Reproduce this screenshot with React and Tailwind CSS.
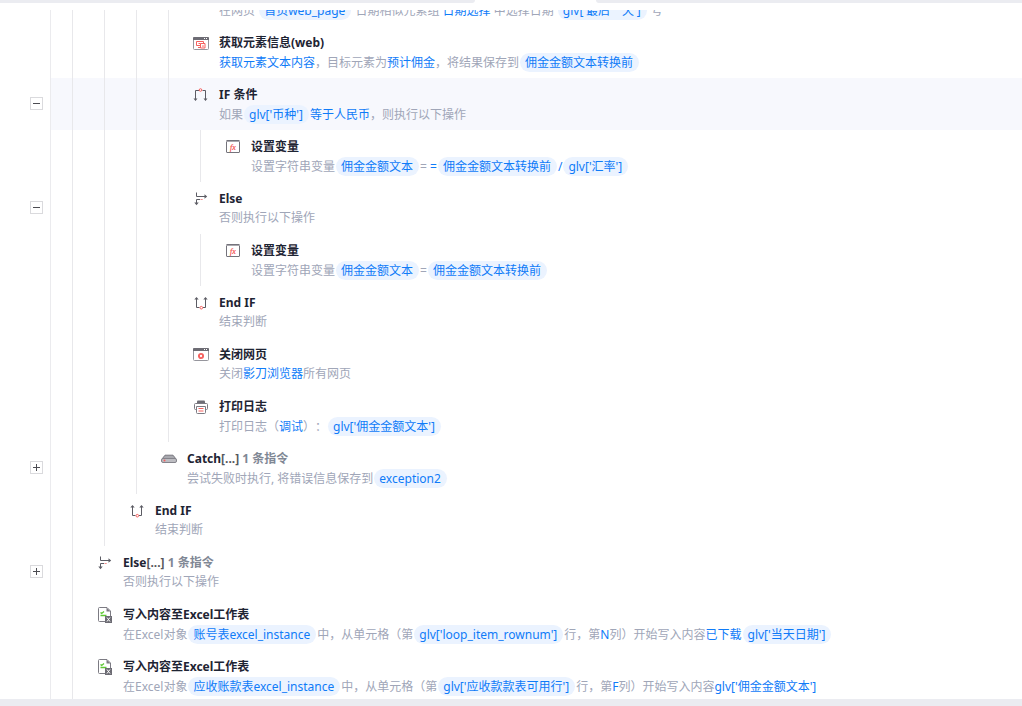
import React from 'react';
import clsx from 'clsx';

const IconBase = ({ children }) => (
  <svg viewBox="0 0 18 18" className="w-[18px] h-[18px] shrink-0" fill="none" stroke="#5c5c64" aria-hidden="true">
    {children}
  </svg>
);

const ElementInfoIcon = () => (
  <IconBase>
    <rect x="1.5" y="2.5" width="15" height="12" rx="1" stroke="#96969d" />
    <path d="M1 5V3a1 1 0 0 1 1-1h14a1 1 0 0 1 1 1v2z" fill="#6d6c74" stroke="none" />
    <path d="M12 3h1v1h-1zM14 3h1v1h-1z" fill="#fff" stroke="none" />
    <path d="M8 10.5H4.500v-4h7V8M8.500 8.500h4.500v4.500H8.500zM6 12.500h2.500M6.500 8.500h2" stroke="#f5615f" />
    <path d="M10 10.500h2l-1 2z" fill="#f5615f" stroke="none" />
  </IconBase>
);

const IfIcon = () => (
  <IconBase>
    <path d="M7 3.500H3.500V12M10.500 3.500h3V12" />
    <path d="M1.500 11.500h4l-2 2.500zM11.500 11.500h4l-2 2.500z" fill="#5c5c64" stroke="none" />
    <circle cx="8.500" cy="3" r="1.300" stroke="#f5615f" />
  </IconBase>
);

const EndIfIcon = () => (
  <IconBase>
    <path d="M4.500 4v8.500H7.500M11 12.500h2.500V4" />
    <path d="M2.300 4.500h4.400L4.500 2zM11.300 4.500h4.400L13.500 2z" fill="#5c5c64" stroke="none" />
    <circle cx="9.300" cy="12.700" r="1.300" stroke="#f5615f" />
  </IconBase>
);

const ElseIcon = () => (
  <IconBase>
    <path d="M4.500 1.500v4H13" />
    <path d="M12.500 3.300v4.400l2.700-2.200z" fill="#5c5c64" stroke="none" />
    <path d="M8 8.500H4.500V12" />
    <path d="M2.300 11.500h4.400l-2.200 2.700z" fill="#5c5c64" stroke="none" />
    <path d="M8.500 8.500h2.200" stroke="#f5908e" />
  </IconBase>
);

const VariableIcon = () => (
  <IconBase>
    <rect x="2.500" y="1.500" width="13" height="12" rx="0.500" stroke="#74737b" />
    <path d="M2 2.500h14" stroke="#a9a8ae" />
    <text x="9" y="11" textAnchor="middle" fill="#f5504e" stroke="#f5504e" strokeWidth="0.200" fontSize="8" fontStyle="italic" fontFamily="Liberation Serif, serif">fx</text>
  </IconBase>
);

const CloseWebIcon = () => (
  <IconBase>
    <rect x="1.500" y="1.500" width="15" height="12" rx="1" stroke="#96969d" />
    <path d="M1 4V2a1 1 0 0 1 1-1h14a1 1 0 0 1 1 1v2z" fill="#6d6c74" stroke="none" />
    <path d="M12 2h1v1h-1zM14 2h1v1h-1z" fill="#fff" stroke="none" />
    <circle cx="9" cy="9" r="2.100" stroke="#f5615f" strokeWidth="1.900" />
  </IconBase>
);

const PrintIcon = () => (
  <IconBase>
    <path d="M5 4V2.500a1 1 0 0 1 1-1h6a1 1 0 0 1 1 1V4z" fill="#6d6c74" stroke="none" />
    <path d="M4.500 10.500h-1a1 1 0 0 1-1-1v-4a1 1 0 0 1 1-1h11a1 1 0 0 1 1 1v4a1 1 0 0 1-1 1h-1" stroke="#7c7b83" />
    <path d="M4.500 7.500h9v6a1 1 0 0 1-1 1h-7a1 1 0 0 1-1-1z" fill="#fff" stroke="#7c7b83" />
    <path d="M6.500 9.500h5M6.500 12h5" stroke="#f5615f" />
  </IconBase>
);

const CatchIcon = () => (
  <IconBase>
    <path d="M5 4.200h8l3 3.800H2z" fill="#a9a9af" stroke="#77767e" strokeLinejoin="round" />
    <rect x="1.500" y="7.500" width="15" height="4" rx="1.500" fill="#bdbdc2" stroke="#85848c" />
    <circle cx="4.500" cy="9.500" r="1" fill="#f5615f" stroke="none" />
  </IconBase>
);

const ExcelIcon = () => (
  <IconBase>
    <path d="M9 14.500H3.500a1 1 0 0 1-1-1v-12a1 1 0 0 1 1-1H11l3.500 3.500V9" stroke="#7c7b83" />
    <path d="M10.500 0.500v4h4z" fill="#7c7b83" stroke="none" />
    <path d="M4.500 5.500l1.200 1L8 4.500M4.500 8.500h6" stroke="#5fc835" strokeWidth="1.300" />
    <rect x="9" y="9" width="7" height="7" fill="#6d6c74" stroke="none" />
    <path d="M11 10.500l3 4M14 10.500l-3 4" stroke="#fff" />
  </IconBase>
);

// plain string = muted text, { b } = highlighted value, { v } = variable tag
const steps = [
  {
    level: 4,
    icon: <ElementInfoIcon />,
    title: '选择日期(web)',
    desc: ['在网页 ', { v: '首页web_page' }, ' 日期相似元素组 ', { b: '日期选择' }, ' 中选择日期 ', { v: "glv['最后一天']" }, ' 号'],
  },
  {
    level: 4,
    icon: <ElementInfoIcon />,
    title: '获取元素信息(web)',
    desc: [{ b: '获取元素文本内容' }, '，目标元素为', { b: '预计佣金' }, '，将结果保存到', { v: '佣金金额文本转换前' }],
  },
  {
    level: 4,
    icon: <IfIcon />,
    title: 'IF 条件',
    fold: 'open',
    active: true,
    desc: ['如果', { v: "glv['币种']" }, { b: '等于人民币' }, '，则执行以下操作'],
  },
  {
    level: 5,
    icon: <VariableIcon />,
    title: '设置变量',
    desc: ['设置字符串变量', { v: '佣金金额文本' }, '= ', { b: '=' }, { v: '佣金金额文本转换前' }, { b: '/' }, { v: "glv['汇率']" }],
  },
  { level: 4, icon: <ElseIcon />, title: 'Else', fold: 'open', desc: ['否则执行以下操作'] },
  {
    level: 5,
    icon: <VariableIcon />,
    title: '设置变量',
    desc: ['设置字符串变量', { v: '佣金金额文本' }, '=', { v: '佣金金额文本转换前' }],
  },
  { level: 4, icon: <EndIfIcon />, title: 'End IF', desc: ['结束判断'] },
  { level: 4, icon: <CloseWebIcon />, title: '关闭网页', desc: ['关闭', { b: '影刀浏览器' }, '所有网页'] },
  {
    level: 4,
    icon: <PrintIcon />,
    title: '打印日志',
    desc: ['打印日志（', { b: '调试' }, '）：', { v: "glv['佣金金额文本']" }],
  },
  {
    level: 3,
    icon: <CatchIcon />,
    title: 'Catch',
    count: '1 条指令',
    fold: 'closed',
    desc: ['尝试失败时执行, 将错误信息保存到', { v: 'exception2' }],
  },
  { level: 2, icon: <EndIfIcon />, title: 'End IF', desc: ['结束判断'] },
  { level: 1, icon: <ElseIcon />, title: 'Else', count: '1 条指令', fold: 'closed', desc: ['否则执行以下操作'] },
  {
    level: 1,
    icon: <ExcelIcon />,
    title: '写入内容至Excel工作表',
    desc: [
      '在Excel对象', { v: '账号表excel_instance' }, '中，从单元格（第', { v: "glv['loop_item_rownum']" },
      '行，第', { b: 'N' }, '列）开始写入内容', { b: '已下载' }, { v: "glv['当天日期']" },
    ],
  },
  {
    level: 1,
    icon: <ExcelIcon />,
    title: '写入内容至Excel工作表',
    desc: [
      '在Excel对象', { v: '应收账款表excel_instance' }, '中，从单元格（第', { v: "glv['应收款款表可用行']" },
      '行，第', { b: 'F' }, '列）开始写入内容', { b: "glv['佣金金额文本']" },
    ],
  },
];

const FoldButton = ({ state }) => (
  <button
    type="button"
    aria-label={state === 'open' ? '收起' : '展开'}
    className="w-[13px] h-[13px] border border-[#dadadd] bg-white flex items-center justify-center"
  >
    <svg viewBox="0 0 7 7" className="w-[7px] h-[7px] shrink-0" stroke="#4c4c52" aria-hidden="true">
      <path d={state === 'open' ? 'M0 3.500h7' : 'M0 3.500h7M3.500 0v7'} />
    </svg>
  </button>
);

const Part = ({ part }) => {
  if (typeof part === 'string') return <span>{part}</span>;
  if (part.b) return <span className="text-[#0f7bf8]">{part.b}</span>;
  return <span className="mx-px pl-[5px] pr-1.5 leading-[19px] rounded-full bg-[#ebf3ff] text-[#0f7bf8]">{part.v}</span>;
};

const Step = ({ step }) => (
  <li className="flex h-[52px]">
    <div className="w-[51px] shrink-0 border-r border-[#ebebee] pt-[19px] pr-[7px] flex items-start justify-end">
      {step.fold && <FoldButton state={step.fold} />}
    </div>
    <div className={clsx('flex flex-1 min-w-0 pl-[21px]', step.active && 'bg-[#f7f8fd]')}>
      {Array.from({ length: step.level }, (_, i) => (
        <div key={i} className="w-8 shrink-0 border-l border-[#e8e8eb]"></div>
      ))}
      <section className="flex -ml-2 pt-[7px] gap-[9px] whitespace-pre">
        <div className="pt-0.5">{step.icon}</div>
        <div>
          <h3 className="font-bold leading-[19px] text-[#1e2433]">
            {step.title}
            {step.count && (
              <>
                <span className="text-[#55565c]">[...]</span>
                <span className="text-[#7f8794]"> {step.count}</span>
              </>
            )}
          </h3>
          <p className="flex items-center mt-px leading-[17px] text-[#a0a6b8]">
            {step.desc.map((part, i) => (
              <Part key={i} part={part} />
            ))}
          </p>
        </div>
      </section>
    </div>
  </li>
);

export default function App() {
  return (
    <div className="h-screen flex flex-col bg-white overflow-hidden text-xs font-['Noto_Sans','Noto_Sans_CJK_SC',sans-serif] [text-spacing-trim:space-all]">
      <header className="flex h-[3px] shrink-0 gap-[121px]">
        <div className="w-[475px] rounded-br bg-[#ebecf1]"></div>
        <div className="flex-1 rounded-bl bg-[#ebecf1]"></div>
      </header>
      <main className="flex-1 min-h-0 mt-[7px] overflow-hidden">
        <ul className="-mt-9">
          {steps.map((step, i) => (
            <Step key={i} step={step} />
          ))}
        </ul>
      </main>
      <footer className="h-[7px] shrink-0 bg-[#ebecf1]"></footer>
    </div>
  );
}
